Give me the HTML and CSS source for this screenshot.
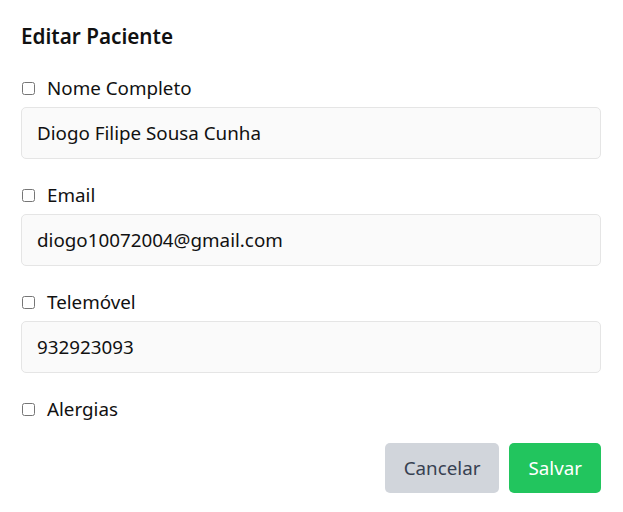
FILE: index.html
```html
<!DOCTYPE html>
<html lang="pt">
<head>
<meta charset="utf-8">
<title>Editar Paciente</title>
<link rel="stylesheet" href="styles.css">
</head>
<body>
<form class="modal">
  <h2 class="title">Editar Paciente</h2>
  <div class="field">
    <label class="check"><input type="checkbox"><span>Nome Completo</span></label>
    <input class="text" type="text" value="Diogo Filipe Sousa Cunha">
  </div>
  <div class="field">
    <label class="check"><input type="checkbox"><span>Email</span></label>
    <input class="text" type="text" value="diogo10072004@gmail.com">
  </div>
  <div class="field">
    <label class="check"><input type="checkbox"><span>Telemóvel</span></label>
    <input class="text" type="text" value="932923093">
  </div>
  <div class="field last">
    <label class="check"><input type="checkbox"><span>Alergias</span></label>
  </div>
  <div class="actions">
    <button type="button" class="btn btn-cancel">Cancelar</button>
    <button type="button" class="btn btn-save">Salvar</button>
  </div>
</form>
</body>
</html>
```
FILE: styles.css
```css
* { box-sizing: border-box; }
html, body { margin: 0; padding: 0; background: #ffffff; }
body {
  font-family: "Noto Sans", "Open Sans", sans-serif;
  color: #111111;
}
.modal {
  width: 623px;
  padding: 22px 22px 0 21px;
  display: flex;
  flex-direction: column;
}
.title {
  margin: 0 0 26px 0;
  font-size: 20.7px;
  line-height: 28px;
  font-weight: 600;
  color: #111111;
}
.field {
  display: flex;
  flex-direction: column;
  gap: 7px;
  margin-bottom: 24px;
}
.field.last { margin-bottom: 22px; }
.check {
  display: flex;
  align-items: center;
  gap: 12px;
  height: 24px;
  font-size: 18.8px;
  color: #111111;
  padding-left: 1px;
}
.check input {
  margin: 0;
  width: 13px;
  height: 13px;
}
.text {
  width: 580px;
  height: 52px;
  padding: 0 15px;
  font-family: inherit;
  font-size: 18.8px;
  color: #111111;
  background: #fafafa;
  border: 1px solid #e5e5e5;
  border-radius: 5px;
  outline: none;
}
.actions {
  display: flex;
  justify-content: flex-end;
  gap: 10px;
}
.btn {
  height: 50px;
  border: none;
  border-radius: 5px;
  font-family: inherit;
  font-size: 18.8px;
  padding: 0 19px;
  cursor: pointer;
}
.btn-cancel { background: #d1d5db; color: #374151; }
.btn-save { background: #22c55e; color: #ffffff; }
```
